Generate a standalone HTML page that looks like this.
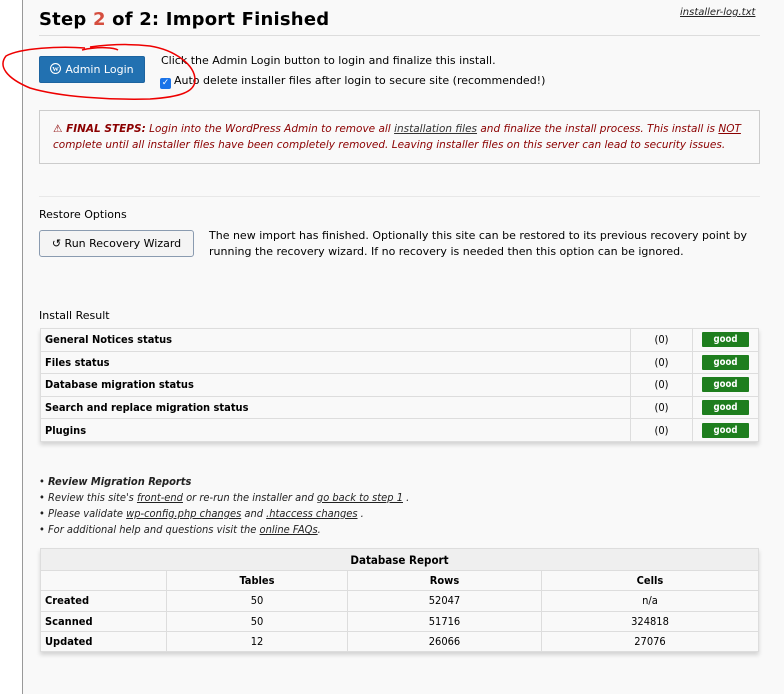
<!DOCTYPE html>
<html><head><meta charset="utf-8"><style>
*{box-sizing:border-box;margin:0;padding:0}
body{width:784px;height:694px;background:#fff;font-family:"DejaVu Sans",Verdana,sans-serif;font-size:11px;color:#000;position:relative;overflow:hidden}
.page{position:absolute;left:22px;top:0;width:762px;height:694px;background:#f9f9f9;border-left:1px solid #999}
.abs{position:absolute}
h1{position:absolute;left:16px;top:9px;font-size:18px;font-weight:bold;font-family:"DejaVu Sans",Verdana,sans-serif;letter-spacing:0.2px}
h1 span{color:#d54e3f}
.hr{position:absolute;left:16px;width:721px;height:1px;background:#ddd}
.btn{position:absolute;left:16px;top:56px;width:106px;height:27px;background:#2271b1;border:1px solid #1d64a0;border-radius:2px;color:#fff;font-size:11px;line-height:25px;text-align:center}
.warn{position:absolute;left:16px;top:110px;width:721px;height:54px;border:1px solid #ccc;background:#f9f9f9;color:#8b0000;font-style:italic;font-size:10.5px;line-height:15.5px;padding:11px 13px}
.warn u{color:#333}
.rbtn{position:absolute;left:16px;top:230px;width:155px;height:27px;border:1px solid #8a9bb0;border-radius:3px;background:#f4f4f4;font-size:11px;line-height:25px;text-align:center}
table{border-collapse:collapse;font-family:"DejaVu Sans Condensed","DejaVu Sans",sans-serif;font-size:11px}
.ir{position:absolute;left:17px;top:328px;width:719px;box-shadow:0 3px 4px rgba(0,0,0,.15)}
.ir td{border:1px solid #ddd;height:22.6px;padding:0 4px;background:#f9f9f9}
.good{display:inline-block;width:47px;height:15px;background:#1e7e1e;color:#fff;font-size:9.5px;font-weight:bold;line-height:15px;text-align:center;border-radius:1px}
.bul{position:absolute;left:16px;font-style:italic;font-size:11px;color:#222;font-family:"DejaVu Sans Condensed","DejaVu Sans",sans-serif}
.db{position:absolute;left:17px;top:548px;width:719px;box-shadow:0 3px 4px rgba(0,0,0,.15)}
.db td{border:1px solid #ddd;height:20.3px;text-align:center;background:#f9f9f9}
.db td.l{text-align:left;padding-left:4px;font-weight:bold}
</style></head><body>
<div class="page">
<h1>Step <span>2</span> of 2: Import Finished</h1>
<div class="abs" style="left:657px;top:7px;font-style:italic;font-size:10px;text-decoration:underline;color:#222">installer-log.txt</div>
<div class="hr" style="top:35px"></div>
<div class="btn"><svg width="11" height="11" viewBox="0 0 20 20" style="vertical-align:-1px;margin-right:4px"><circle cx="10" cy="10" r="9" fill="none" stroke="#fff" stroke-width="2"/><text x="10" y="14.5" text-anchor="middle" font-size="12" font-weight="bold" fill="#fff" font-family="Liberation Serif">W</text></svg>Admin Login</div>
<div class="abs" style="left:138px;top:54px;font-size:11px">Click the Admin Login button to login and finalize this install.</div>
<div class="abs" style="left:137px;top:74px;font-size:11px"><span style="display:inline-block;width:11px;height:11px;background:#1a73e8;border-radius:2px;color:#fff;font-size:9px;line-height:11px;text-align:center;vertical-align:-1px;margin-right:3px">✓</span>Auto delete installer files after login to secure site (recommended!)</div>
<div class="warn"><b>⚠ FINAL STEPS:</b> Login into the WordPress Admin to remove all <u>installation files</u> and finalize the install process. This install is <u style="color:#8b0000">NOT</u> complete until all installer files have been completely removed. Leaving installer files on this server can lead to security issues.</div>
<div class="hr" style="top:196px;background:#e8e8e8"></div>
<div class="abs" style="left:16px;top:208px">Restore Options</div>
<div class="rbtn">↺ Run Recovery Wizard</div>
<div class="abs" style="left:186px;top:228px;width:550px;line-height:16px">The new import has finished. Optionally this site can be restored to its previous recovery point by running the recovery wizard. If no recovery is needed then this option can be ignored.</div>
<div class="abs" style="left:16px;top:309px">Install Result</div>
<table class="ir">
<tr><td style="width:590px"><b>General Notices status</b></td><td style="width:62px;text-align:center">(0)</td><td style="text-align:center"><span class="good">good</span></td></tr>
<tr><td><b>Files status</b></td><td style="text-align:center">(0)</td><td style="text-align:center"><span class="good">good</span></td></tr>
<tr><td><b>Database migration status</b></td><td style="text-align:center">(0)</td><td style="text-align:center"><span class="good">good</span></td></tr>
<tr><td><b>Search and replace migration status</b></td><td style="text-align:center">(0)</td><td style="text-align:center"><span class="good">good</span></td></tr>
<tr><td><b>Plugins</b></td><td style="text-align:center">(0)</td><td style="text-align:center"><span class="good">good</span></td></tr>
</table>
<div class="bul" style="top:475px">• <b>Review Migration Reports</b></div>
<div class="bul" style="top:491px">• Review this site's <u>front-end</u> or re-run the installer and <u>go back to step 1</u> .</div>
<div class="bul" style="top:507px">• Please validate <u>wp-config.php changes</u> and <u>.htaccess changes</u> .</div>
<div class="bul" style="top:523px">• For additional help and questions visit the <u>online FAQs</u>.</div>
<table class="db">
<tr><td colspan="4" style="background:#efefef;font-weight:bold;font-size:11.5px;height:22px">Database Report</td></tr>
<tr><td style="width:126px"></td><td style="width:181px"><b>Tables</b></td><td style="width:194px"><b>Rows</b></td><td><b>Cells</b></td></tr>
<tr><td class="l">Created</td><td>50</td><td>52047</td><td>n/a</td></tr>
<tr><td class="l">Scanned</td><td>50</td><td>51716</td><td>324818</td></tr>
<tr><td class="l">Updated</td><td>12</td><td>26066</td><td>27076</td></tr>
</table>
</div>
<svg class="abs" style="left:0;top:0" width="220" height="110"><path d="M82 50 C100 46 115 48 118 50 M85 48 C60 46 20 48 6 56 C-2 66 6 78 30 88 C60 97 110 100 150 99 C180 97 195 92 195 80 C195 65 175 50 150 46 C125 43 105 45 90 47" fill="none" stroke="#e00" stroke-width="1.5"/></svg>
</body></html>
